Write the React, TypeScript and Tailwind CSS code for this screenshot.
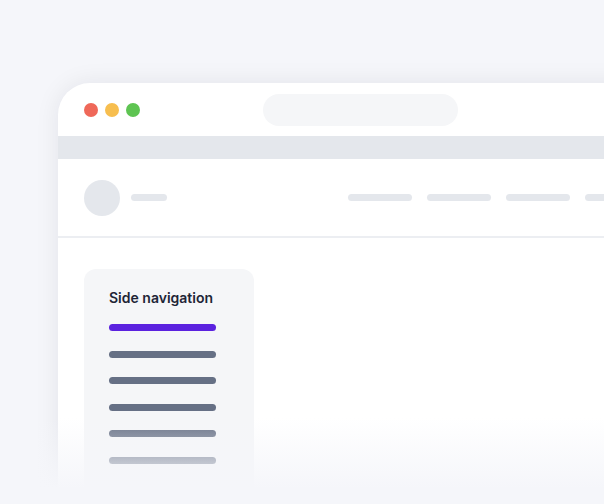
export default function App() {
  const navLines = [0, 1, 2, 3, 4];
  const pills = [0, 1, 2, 3];

  return (
    <div
      className="relative h-[504px] w-[604px] overflow-hidden bg-[#f5f6fa] pl-[58px] pt-[83px]"
      style={{ fontFamily: "Inter, 'Noto Sans', sans-serif" }}
    >
      {/* Browser window */}
      <div className="h-[460px] w-[600px] rounded-tl-[32px] bg-white shadow-[0_0_24px_rgba(15,23,42,0.08)]">
        {/* Title bar */}
        <div className="flex h-[53px] items-center pl-[26px]">
          <div className="flex gap-[7px]">
            <span className="h-[14px] w-[14px] rounded-full bg-[#ef6859]" />
            <span className="h-[14px] w-[14px] rounded-full bg-[#f7be4f]" />
            <span className="h-[14px] w-[14px] rounded-full bg-[#5ec452]" />
          </div>
          <div className="ml-[123px] h-[32px] w-[195px] rounded-full bg-[#f5f6f8]" />
        </div>
        <div className="h-[23px] bg-[#e4e7ec]" />

        {/* Header */}
        <div className="flex h-[79px] items-center border-b-2 border-[#eceef2] pl-[26px]">
          <div className="h-[36px] w-[36px] rounded-full bg-[#e4e7ec]" />
          <div className="ml-[11px] h-[7px] w-[36px] rounded-full bg-[#e4e7ec]" />
          <div className="ml-[181px] flex gap-[15px]">
            {pills.map((p) => (
              <div key={p} className="h-[7px] w-[64px] rounded-full bg-[#e4e7ec]" />
            ))}
          </div>
        </div>

        {/* Content */}
        <div className="pl-[26px] pt-[31px]">
          <div className="h-[240px] w-[170px] rounded-[12px] bg-[#f5f6f8] pl-[25px] pt-[19px]">
            <p className="text-[14px] font-semibold leading-[20px] text-[#1e2536]">Side navigation</p>
            <div className="mt-[16px] flex flex-col gap-[19.6px]">
              <div className="h-[7px] w-[107px] rounded-full bg-[#5b22df]" />
              {navLines.map((i) => (
                <div key={i} className="h-[7px] w-[107px] rounded-full bg-[#667085]" />
              ))}
            </div>
          </div>
        </div>
      </div>

      {/* Bottom fade */}
      <div className="pointer-events-none absolute bottom-0 left-0 h-[86px] w-full bg-[linear-gradient(to_bottom,rgba(245,246,250,0)_0%,#f5f6fa_82%)]" />
    </div>
  );
}
